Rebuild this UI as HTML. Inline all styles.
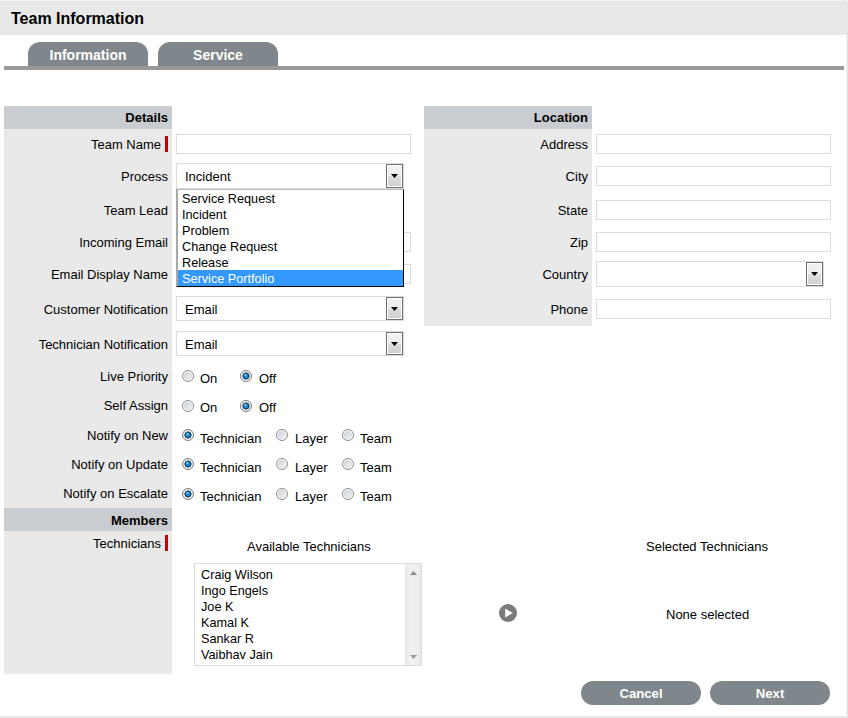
<!DOCTYPE html>
<html><head><meta charset="utf-8">
<style>
html,body{margin:0;padding:0;width:848px;height:718px;overflow:hidden;background:#fff;font-family:"Liberation Sans",sans-serif;color:#000;}
.a{position:absolute;}
.t{position:absolute;font-size:13px;line-height:16px;white-space:nowrap;}
.lb{position:absolute;font-size:13px;line-height:16px;white-space:nowrap;text-align:right;}
.b{font-weight:bold;}
.inp{position:absolute;box-sizing:border-box;border:1px solid #dcdcdc;background:#fff;}
.sel{position:absolute;box-sizing:border-box;border:1px solid #dcdcdc;background:#fff;}
.btn{position:absolute;box-sizing:border-box;border:1px solid #707070;background:linear-gradient(#f2f2f2 0%,#ebebeb 50%,#dddddd 51%,#cfcfcf 100%);box-shadow:inset 0 0 0 1px #fff;}
.tri{position:absolute;width:0;height:0;border-left:3.5px solid transparent;border-right:3.5px solid transparent;border-top:4px solid #000;margin-left:1px;}
.red{position:absolute;width:3px;background:#cc0000;}
.rad{position:absolute;box-sizing:border-box;width:12px;height:12px;border-radius:50%;border:1px solid #8c8c8c;background:radial-gradient(circle at 50% 50%,rgba(255,255,255,0) 0,rgba(255,255,255,0) 3.4px,#d8dce0 3.8px,#fdfdfd 4.3px,#fdfdfd 100%),linear-gradient(135deg,#c0c7cf 0%,#dde1e5 45%,#f8f8f8 100%);}
.radc{position:absolute;box-sizing:border-box;width:12px;height:12px;border-radius:50%;border:1px solid #7c7c7c;background:radial-gradient(circle at 42% 38%,rgba(190,240,255,.9) 0,rgba(190,240,255,0) 1.6px),radial-gradient(circle at 50% 50%,#2b9ad8 0,#1a84cc 1.7px,#0d5a90 2.5px,#0a2a44 3.2px,#e8e8e8 3.8px,#f8f8f8 100%);}
.pill{position:absolute;height:23px;padding-top:1px;width:120px;border-radius:12px;background:#7f878c;color:#fff;font-weight:bold;font-size:13.2px;line-height:24px;text-align:center;}
.tab{position:absolute;top:42px;height:23px;padding-top:1px;width:120px;border-radius:12px 12px 0 0;background:#7f878c;color:#fff;font-weight:bold;font-size:14px;line-height:24px;text-align:center;}
.dd{font-size:12.7px;}
</style></head>
<body>
<!-- page frame -->
<div class="a" style="left:0;top:0;width:848px;height:1px;background:#f4f4f4"></div>
<div class="a" style="left:847px;top:0;width:1px;height:4px;background:#f2f2f2"></div>
<div class="a" style="left:0;top:1px;width:847px;height:34px;background:#e8e8e8"></div>
<div class="a" style="left:846px;top:35px;width:1px;height:683px;background:#f2f2f2"></div>
<div class="a" style="left:847px;top:3px;width:1px;height:715px;background:#e4e4e4"></div>
<div class="a" style="left:0;top:716px;width:848px;height:1px;background:#e6e6e6"></div>
<div class="a" style="left:0;top:717px;width:848px;height:1px;background:#ebebeb"></div>
<div class="t b" style="left:11px;top:9px;font-size:16px;line-height:19px">Team Information</div>

<!-- tabs -->
<div class="tab" style="left:28px">Information</div>
<div class="tab" style="left:158px">Service</div>
<div class="a" style="left:4px;top:66px;width:840px;height:4px;background:#999"></div>

<!-- Details column -->
<div class="a" style="left:4px;top:106px;width:168px;height:23px;background:#c9ccd0"></div>
<div class="a" style="left:4px;top:129px;width:168px;height:379px;background:#e9e9e9"></div>
<div class="a" style="left:4px;top:508px;width:168px;height:23px;background:#c9ccd0"></div>
<div class="a" style="left:4px;top:531px;width:168px;height:143px;background:#e9e9e9"></div>

<div class="lb b" style="left:4px;width:164px;top:110px">Details</div>
<div class="lb" style="left:4px;width:157px;top:137px">Team Name</div>
<div class="red" style="left:165px;top:136px;height:16px"></div>
<div class="lb" style="left:4px;width:164px;top:169px">Process</div>
<div class="lb" style="left:4px;width:164px;top:203px">Team Lead</div>
<div class="lb" style="left:4px;width:164px;top:235px">Incoming Email</div>
<div class="lb" style="left:4px;width:164px;top:267px">Email Display Name</div>
<div class="lb" style="left:4px;width:164px;top:302px">Customer Notification</div>
<div class="lb" style="left:4px;width:164px;top:337px">Technician Notification</div>
<div class="lb" style="left:4px;width:164px;top:369px">Live Priority</div>
<div class="lb" style="left:4px;width:164px;top:398px">Self Assign</div>
<div class="lb" style="left:4px;width:164px;top:428px">Notify on New</div>
<div class="lb" style="left:4px;width:164px;top:457px">Notify on Update</div>
<div class="lb" style="left:4px;width:164px;top:486px">Notify on Escalate</div>
<div class="lb b" style="left:4px;width:164px;top:513px">Members</div>
<div class="lb" style="left:4px;width:157px;top:536px">Technicians</div>
<div class="red" style="left:165px;top:535px;height:16px"></div>

<!-- Details inputs -->
<div class="inp" style="left:176px;top:134px;width:235px;height:20px"></div>
<div class="inp" style="left:176px;top:232px;width:235px;height:20px"></div>
<div class="inp" style="left:176px;top:264px;width:235px;height:20px"></div>

<div class="sel" style="left:176px;top:163px;width:228px;height:26px"></div>
<div class="t" style="left:185px;top:169px">Incident</div>
<div class="btn" style="left:386px;top:164px;width:17px;height:24px"></div>
<svg class="a" style="left:391px;top:174px" width="7" height="4"><polygon points="0,0 7,0 3.5,4" fill="#000"/></svg>

<!-- dropdown list -->
<div class="a" style="left:176px;top:189px;width:228px;height:98px;box-sizing:border-box;background:#fff;border-left:2px solid #a8a8a8;border-top:1px solid #b8b8b8;border-right:1px solid #000;border-bottom:1px solid #000"></div>
<div class="a" style="left:178px;top:270px;width:225px;height:16px;background:#3399ff"></div>
<div class="t dd" style="left:182px;top:191px">Service Request</div>
<div class="t dd" style="left:182px;top:207px">Incident</div>
<div class="t dd" style="left:182px;top:223px">Problem</div>
<div class="t dd" style="left:182px;top:239px">Change Request</div>
<div class="t dd" style="left:182px;top:255px">Release</div>
<div class="t dd" style="left:182px;top:271px;color:#fff">Service Portfolio</div>

<div class="sel" style="left:176px;top:296px;width:228px;height:25px"></div>
<div class="t" style="left:185px;top:302px">Email</div>
<div class="btn" style="left:386px;top:297px;width:17px;height:23px"></div>
<svg class="a" style="left:391px;top:307px" width="7" height="4"><polygon points="0,0 7,0 3.5,4" fill="#000"/></svg>

<div class="sel" style="left:176px;top:331px;width:228px;height:25px"></div>
<div class="t" style="left:185px;top:337px">Email</div>
<div class="btn" style="left:386px;top:332px;width:17px;height:23px"></div>
<svg class="a" style="left:391px;top:342px" width="7" height="4"><polygon points="0,0 7,0 3.5,4" fill="#000"/></svg>

<!-- radios -->
<div class="rad" style="left:182px;top:370px"></div><div class="t" style="left:200px;top:371px">On</div>
<div class="radc" style="left:240px;top:370px"></div><div class="t" style="left:259px;top:371px">Off</div>
<div class="rad" style="left:182px;top:400px"></div><div class="t" style="left:200px;top:400px">On</div>
<div class="radc" style="left:240px;top:400px"></div><div class="t" style="left:259px;top:400px">Off</div>

<div class="radc" style="left:182px;top:429px"></div><div class="t" style="left:200px;top:431px">Technician</div>
<div class="rad" style="left:276px;top:429px"></div><div class="t" style="left:295px;top:431px">Layer</div>
<div class="rad" style="left:342px;top:429px"></div><div class="t" style="left:360px;top:431px">Team</div>

<div class="radc" style="left:182px;top:458px"></div><div class="t" style="left:200px;top:460px">Technician</div>
<div class="rad" style="left:276px;top:458px"></div><div class="t" style="left:295px;top:460px">Layer</div>
<div class="rad" style="left:342px;top:458px"></div><div class="t" style="left:360px;top:460px">Team</div>

<div class="radc" style="left:182px;top:488px"></div><div class="t" style="left:200px;top:489px">Technician</div>
<div class="rad" style="left:276px;top:488px"></div><div class="t" style="left:295px;top:489px">Layer</div>
<div class="rad" style="left:342px;top:488px"></div><div class="t" style="left:360px;top:489px">Team</div>

<!-- Location -->
<div class="a" style="left:424px;top:106px;width:168px;height:23px;background:#c9ccd0"></div>
<div class="a" style="left:424px;top:129px;width:168px;height:197px;background:#e9e9e9"></div>
<div class="lb b" style="left:424px;width:164px;top:110px">Location</div>
<div class="lb" style="left:424px;width:164px;top:137px">Address</div>
<div class="lb" style="left:424px;width:164px;top:169px">City</div>
<div class="lb" style="left:424px;width:164px;top:203px">State</div>
<div class="lb" style="left:424px;width:164px;top:235px">Zip</div>
<div class="lb" style="left:424px;width:164px;top:267px">Country</div>
<div class="lb" style="left:424px;width:164px;top:302px">Phone</div>

<div class="inp" style="left:596px;top:134px;width:235px;height:20px"></div>
<div class="inp" style="left:596px;top:166px;width:235px;height:20px"></div>
<div class="inp" style="left:596px;top:200px;width:235px;height:20px"></div>
<div class="inp" style="left:596px;top:232px;width:235px;height:20px"></div>
<div class="sel" style="left:596px;top:261px;width:228px;height:26px"></div>
<div class="btn" style="left:806px;top:262px;width:17px;height:24px"></div>
<svg class="a" style="left:811px;top:272px" width="7" height="4"><polygon points="0,0 7,0 3.5,4" fill="#000"/></svg>
<div class="inp" style="left:596px;top:299px;width:235px;height:20px"></div>

<!-- Members -->
<div class="t" style="left:247px;top:539px">Available Technicians</div>
<div class="t" style="left:646px;top:539px">Selected Technicians</div>
<div class="inp" style="left:194px;top:563px;width:228px;height:103px"></div>
<div class="a" style="left:405px;top:564px;width:16px;height:101px;background:linear-gradient(90deg,#e4e4e4 0,#ececec 2px,#f1f1f1 50%,#ececec 90%,#e6e6e6 100%)"></div>
<svg class="a" style="left:410px;top:571px" width="7" height="4"><polygon points="3.5,0 7,4 0,4" fill="#8a8a8a"/></svg>
<svg class="a" style="left:410px;top:655px" width="7" height="4"><polygon points="0,0 7,0 3.5,4" fill="#9a9a9a"/></svg>
<div class="t dd" style="left:201px;top:567px">Craig Wilson</div>
<div class="t dd" style="left:201px;top:583px">Ingo Engels</div>
<div class="t dd" style="left:201px;top:599px">Joe K</div>
<div class="t dd" style="left:201px;top:615px">Kamal K</div>
<div class="t dd" style="left:201px;top:631px">Sankar R</div>
<div class="t dd" style="left:201px;top:647px">Vaibhav Jain</div>

<svg class="a" style="left:498px;top:603px" width="20" height="20" viewBox="0 0 20 20"><circle cx="10" cy="10" r="9" fill="#7b7b7b"/><path d="M7.2 5.5 L14.8 10 L7.2 14.5 Z" fill="#fff"/></svg>
<div class="t" style="left:666px;top:607px">None selected</div>

<!-- buttons -->
<div class="pill" style="left:581px;top:681px">Cancel</div>
<div class="pill" style="left:710px;top:681px">Next</div>
</body></html>
